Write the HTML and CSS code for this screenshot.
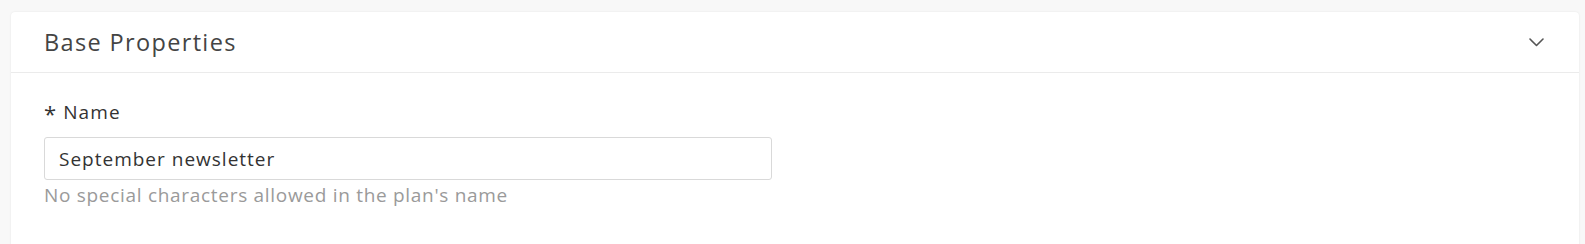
FILE: index.html
```html
<!DOCTYPE html>
<html lang="en">
<head>
<meta charset="utf-8">
<title>Base Properties</title>
<link rel="stylesheet" href="styles.css">
</head>
<body>
<section class="card">
  <header class="card-header">
    <h2 class="card-title">Base Properties</h2>
    <svg class="chevron" width="15" height="9" viewBox="0 0 15 9" aria-hidden="true">
      <polyline points="1,1 7.5,7.5 14,1" fill="none" stroke="#555" stroke-width="1.6" stroke-linecap="round" stroke-linejoin="round"/>
    </svg>
  </header>
  <div class="card-body">
    <label class="field-label" for="name"><span class="req">*</span>Name</label>
    <input class="text-input" id="name" type="text" value="September newsletter">
    <div class="help">No special characters allowed in the plan's name</div>
  </div>
</section>
</body>
</html>
```
FILE: styles.css
```css
html, body {
  margin: 0;
  padding: 0;
  background: #f8f8f8;
  overflow: hidden;
}
body {
  padding: 12px 6px 0 11px;
  font-family: "Open Sans", "Liberation Sans", sans-serif;
  color: #333;
}
.card {
  background: #fff;
  border-radius: 4px 4px 0 0;
  box-shadow: 0 0 2px rgba(0, 0, 0, 0.09);
  min-height: 240px;
}
.card-header {
  height: 60px;
  display: flex;
  align-items: center;
  justify-content: space-between;
  padding: 0 35px 0 33px;
  border-bottom: 1px solid #ebebeb;
}
.card-title {
  margin: 0;
  font-size: 23.5px;
  font-weight: 400;
  letter-spacing: 1.35px;
  color: #444;
}
.chevron {
  display: block;
}
.card-body {
  padding: 27px 33px 0 33px;
  display: flex;
  flex-direction: column;
  align-items: flex-start;
}
.field-label {
  display: block;
  height: 24px;
  font-size: 19px;
  line-height: 24px;
  letter-spacing: 1.1px;
  color: #333;
  margin-bottom: 13px;
}
.req {
  display: inline-block;
  font-size: 22px;
  line-height: 0;
  letter-spacing: 0;
  margin-right: 7px;
  vertical-align: -3px;
}
.text-input {
  box-sizing: border-box;
  width: 728px;
  height: 43px;
  margin: 0;
  padding: 0 14px;
  border: 1px solid #d9d9d9;
  border-radius: 3px;
  font-family: "Open Sans", "Liberation Sans", sans-serif;
  font-size: 19px;
  letter-spacing: 1px;
  color: #333;
  background: #fff;
  outline: none;
}
.help {
  margin-top: 3px;
  font-size: 19px;
  line-height: 24px;
  letter-spacing: 0.7px;
  color: #9a9a9a;
}
```
